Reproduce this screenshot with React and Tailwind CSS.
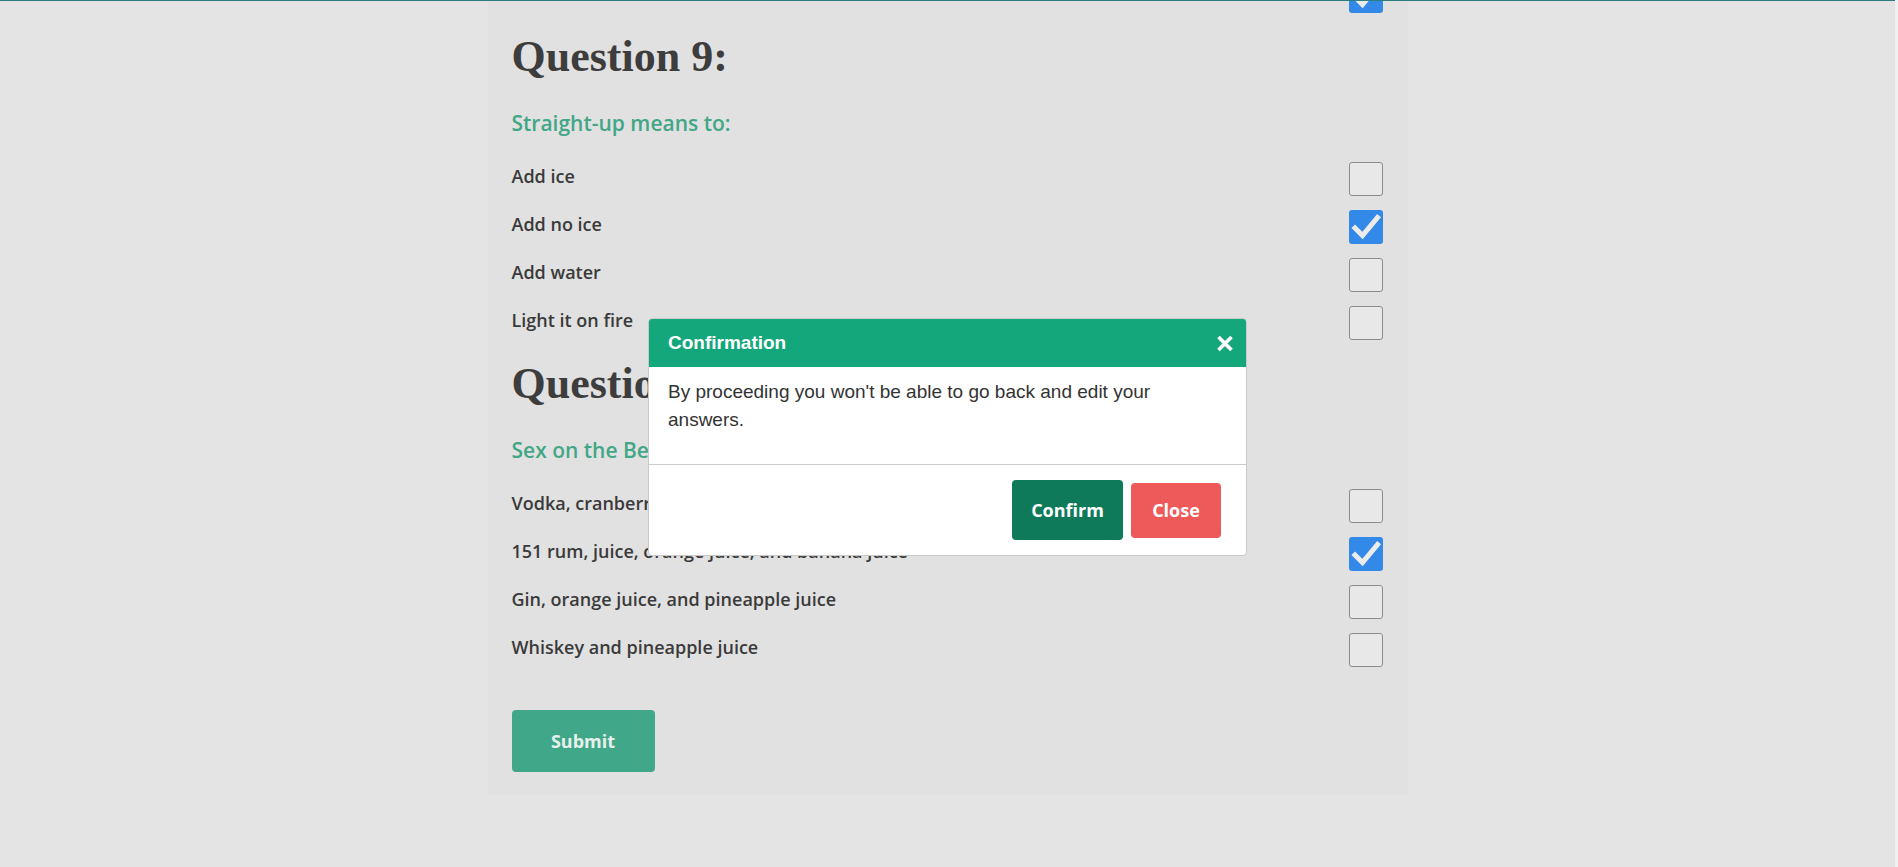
import React from 'react'

const sans = "font-['Open_Sans',sans-serif]"

function Checkbox({ checked }) {
  if (checked) {
    return (
      <div className="w-[34px] h-[34px] rounded-[3px] bg-[#3389e8] flex items-center justify-center shrink-0">
        <svg width="34" height="34" viewBox="0 0 34 34">
          <polyline points="6,18 13.5,25.5 28.5,7.5" fill="none" stroke="#ececec" strokeWidth="5" strokeLinecap="square" />
        </svg>
      </div>
    )
  }
  return <div className="w-[34px] h-[34px] rounded-[3px] border-[1.5px] border-[#8c8c8c] bg-[#e8e8e8] shrink-0" />
}

function Option({ label, checked, className = '', labelClass = 'mb-[6px]' }) {
  return (
    <div className={`h-[48px] flex items-center justify-between ${className}`}>
      <span className={`${sans} text-[18px] font-semibold text-[#3a3a3a] ${labelClass}`}>{label}</span>
      <Checkbox checked={checked} />
    </div>
  )
}

function Question({ number, prompt, options }) {
  return (
    <div>
      <h2 className="mt-[11px] font-['Liberation_Serif',serif] font-bold text-[44px] leading-[52px] text-[#3d3d3d]">
        Question {number}:
      </h2>
      <p className={`${sans} mt-[26px] text-[21px] leading-[28px] font-semibold text-[#42a787]`}>{prompt}</p>
      <div className="mt-[18px]">
        {options.map((o) => (
          <Option key={o.label} label={o.label} checked={o.checked} />
        ))}
      </div>
    </div>
  )
}

const questions = [
  {
    number: 9,
    prompt: 'Straight-up means to:',
    options: [
      { label: 'Add ice', checked: false },
      { label: 'Add no ice', checked: true },
      { label: 'Add water', checked: false },
      { label: 'Light it on fire', checked: false }
    ]
  },
  {
    number: 10,
    prompt: 'Sex on the Beach contains:',
    options: [
      { label: 'Vodka, cranberry juice, peach schnapps and orange juice', checked: false },
      { label: '151 rum, juice, orange juice, and banana juice', checked: true },
      { label: 'Gin, orange juice, and pineapple juice', checked: false },
      { label: 'Whiskey and pineapple juice', checked: false }
    ]
  }
]

function App() {
  return (
    <div className="h-screen overflow-hidden flex bg-[#e4e4e4]">
      <div className="flex-1 flex flex-col overflow-hidden">
        <div className="h-px bg-[#2b7c7d] shrink-0 relative z-10" />
        <div className="flex justify-center">
          <div className="w-[920px] bg-[#e1e1e1] pl-[24px] pr-[25px] pb-[23px]">
            {/* last answer of the previous question, scrolled off the top */}
            <Option
              label="Shaken, strained (up)"
              checked
              className="-mt-[29px]"
              labelClass="mb-[16px]"
            />

            {questions.map((q) => (
              <Question key={q.number} number={q.number} prompt={q.prompt} options={q.options} />
            ))}

            <button className={`${sans} mt-[36px] w-[143px] h-[62px] rounded-[4px] bg-[#40a888] text-[#e7f0ec] text-[18px] font-bold`}>
              Submit
            </button>
          </div>
        </div>
      </div>
      <div className="w-[3px] bg-[#f1f1f1] shrink-0" />

      {/* Confirmation modal */}
      <div className="fixed inset-0 flex justify-center items-start pt-[318px] pr-[3px]">
        <div className="w-[599px] bg-white border border-[#c9c9c9] rounded-[4px] overflow-hidden font-['Liberation_Sans',Arial,sans-serif]">
          <div className="h-[48px] bg-[#14a77b] flex items-center justify-between pl-[19px] pr-[12px]">
            <span className="text-white text-[19px] font-bold">Confirmation</span>
            <svg width="18" height="17" viewBox="0 0 18 17">
              <path d="M2.5 2 L15.5 15 M15.5 2 L2.5 15" stroke="#ffffff" strokeWidth="3.6" strokeLinecap="butt" />
            </svg>
          </div>
          <div className="px-[19px] pt-[11px] pb-[30px]">
            <p className="text-[19px] leading-[28px] text-[#333333]">
              By proceeding you won't be able to go back and edit your answers.
            </p>
          </div>
          <div className="border-t border-[#cccccc] flex justify-end items-center gap-2 pt-[15px] pb-[15px] pr-[25px]">
            <button className={`${sans} w-[111px] h-[60px] rounded-[4px] bg-[#0e7a5a] text-white text-[18px] font-bold`}>
              Confirm
            </button>
            <button className={`${sans} w-[90px] h-[55px] rounded-[4px] bg-[#ee5a5a] text-white text-[18px] font-bold`}>
              Close
            </button>
          </div>
        </div>
      </div>
    </div>
  )
}

export default App
